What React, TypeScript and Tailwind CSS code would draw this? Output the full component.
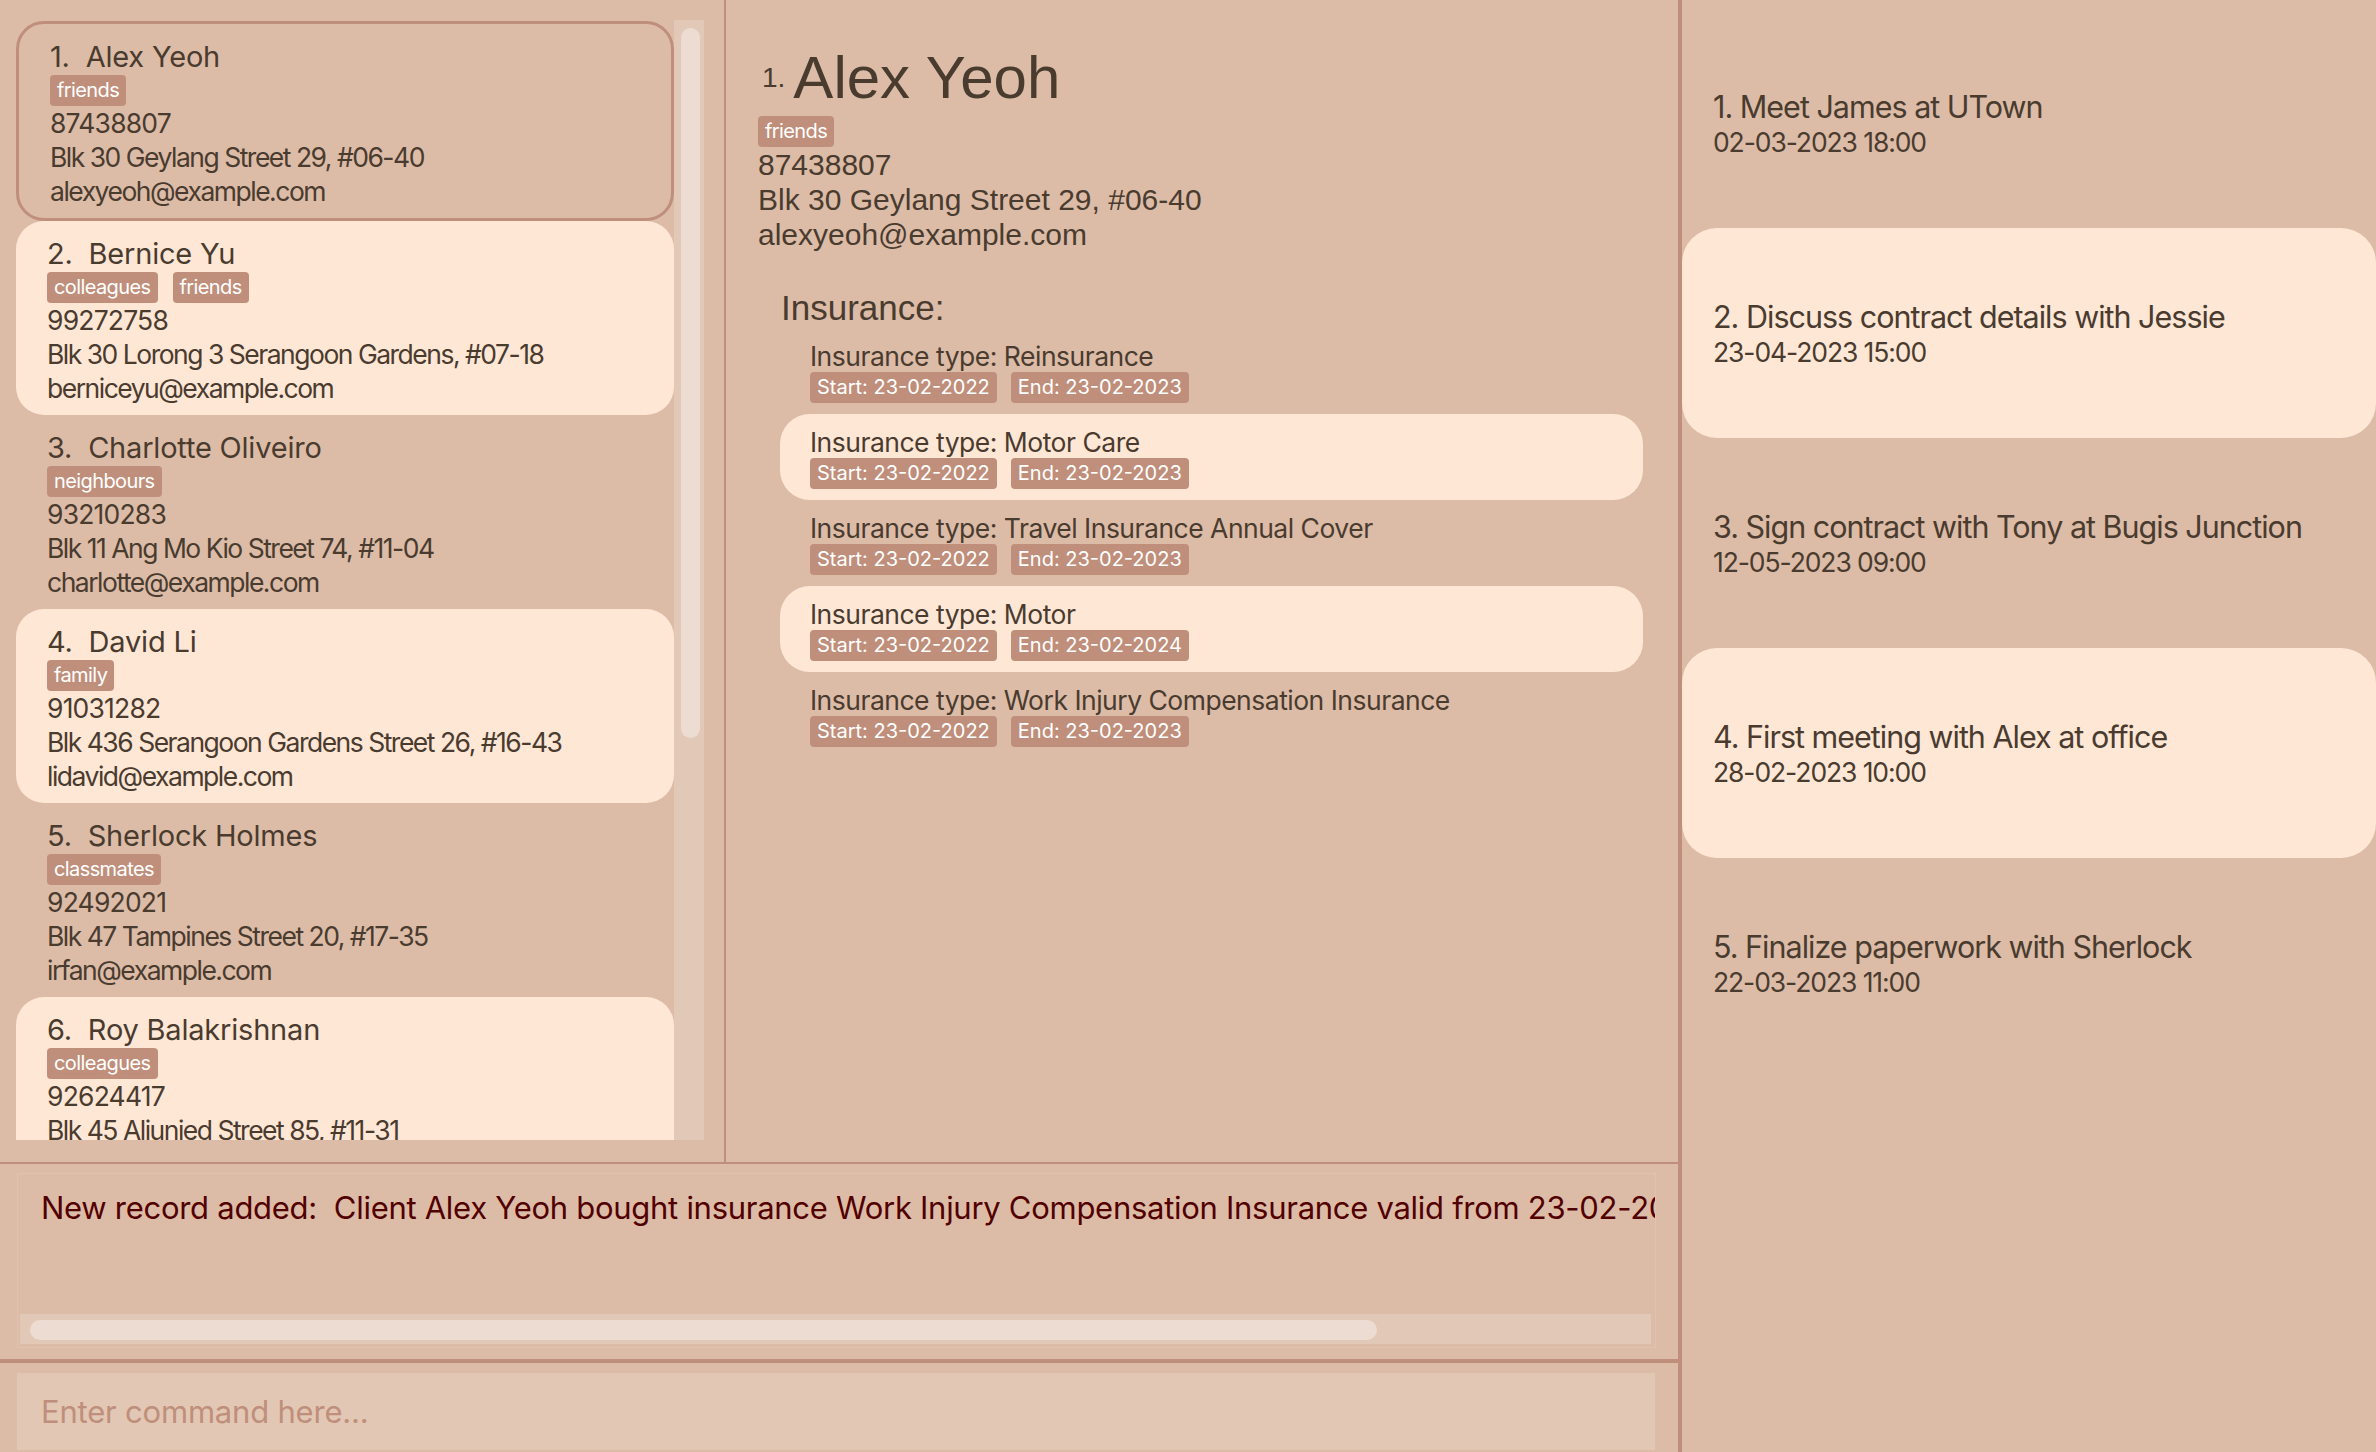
import React from 'react';

interface Person {
  name: string;
  tags: string[];
  phone: string;
  address: string;
  email: string;
}

const persons: Person[] = [
  { name: 'Alex Yeoh', tags: ['friends'], phone: '87438807', address: 'Blk 30 Geylang Street 29, #06-40', email: 'alexyeoh@example.com' },
  { name: 'Bernice Yu', tags: ['colleagues', 'friends'], phone: '99272758', address: 'Blk 30 Lorong 3 Serangoon Gardens, #07-18', email: 'berniceyu@example.com' },
  { name: 'Charlotte Oliveiro', tags: ['neighbours'], phone: '93210283', address: 'Blk 11 Ang Mo Kio Street 74, #11-04', email: 'charlotte@example.com' },
  { name: 'David Li', tags: ['family'], phone: '91031282', address: 'Blk 436 Serangoon Gardens Street 26, #16-43', email: 'lidavid@example.com' },
  { name: 'Sherlock Holmes', tags: ['classmates'], phone: '92492021', address: 'Blk 47 Tampines Street 20, #17-35', email: 'irfan@example.com' },
  { name: 'Roy Balakrishnan', tags: ['colleagues'], phone: '92624417', address: 'Blk 45 Aljunied Street 85, #11-31', email: 'royb@example.com' },
];

const insurances = [
  { type: 'Reinsurance', start: '23-02-2022', end: '23-02-2023' },
  { type: 'Motor Care', start: '23-02-2022', end: '23-02-2023' },
  { type: 'Travel Insurance Annual Cover', start: '23-02-2022', end: '23-02-2023' },
  { type: 'Motor', start: '23-02-2022', end: '23-02-2024' },
  { type: 'Work Injury Compensation Insurance', start: '23-02-2022', end: '23-02-2023' },
];

const events = [
  { title: 'Meet James at UTown', when: '02-03-2023 18:00' },
  { title: 'Discuss contract details with Jessie', when: '23-04-2023 15:00' },
  { title: 'Sign contract with Tony at Bugis Junction', when: '12-05-2023 09:00' },
  { title: 'First meeting with Alex at office', when: '28-02-2023 10:00' },
  { title: 'Finalize paperwork with Sherlock', when: '22-03-2023 11:00' },
];

const Tag: React.FC<{ children: React.ReactNode; tight?: boolean }> = ({ children, tight }) => (
  <span
    className={
      'h-[31px] rounded-[4px] bg-[#bf8f7b] px-[7px] text-[20px] leading-[31px] text-white whitespace-nowrap ' +
      (tight ? 'tracking-[-0.6px]' : 'tracking-[0px]')
    }
  >
    {children}
  </span>
);

const PersonCard: React.FC<{ p: Person; i: number }> = ({ p, i }) => {
  const selected = i === 0;
  const shaded = i % 2 === 1;
  return (
    <div
      className={
        'shrink-0 rounded-[28px] pl-[31px] pt-[15px] pb-[10px] ' +
        (shaded ? 'bg-[#ffe7d6] ' : '') +
        (selected ? 'border-[3px] border-[#bf8f7b]' : '')
      }
    >
      <div className="whitespace-pre text-[29px] leading-[36px] tracking-[-0.2px]">{`${i + 1}.  ${p.name}`}</div>
      <div className="flex gap-[15px]">
        {p.tags.map((t) => (
          <Tag key={t} tight>
            {t}
          </Tag>
        ))}
      </div>
      <div className="text-[26.5px] leading-[34px] tracking-[-0.8px]">{p.phone}</div>
      <div className="whitespace-nowrap text-[26.5px] leading-[34px] tracking-[-1.5px]">{p.address}</div>
      <div className="text-[26.5px] leading-[34px] tracking-[-1.5px]">{p.email}</div>
    </div>
  );
};

const PersonList = () => (
  <div className="flex w-[726px] shrink-0 border-r-2 border-[#bf8f7b] pl-[16px] pt-[20px]">
    <div className="flex h-[1120px] w-[658px] flex-col overflow-hidden pt-[1px]">
      {persons.map((p, i) => (
        <PersonCard key={p.name} p={p} i={i} />
      ))}
    </div>
    <div className="h-[1120px] w-[30px] bg-[#e2c8b7] pl-[7px] pt-[8px]">
      <div className="h-[710px] w-[19px] rounded-full bg-[#eddcd2]" />
    </div>
  </div>
);

const Detail = () => (
  <div className="flex-1 pl-[32px] pt-[44px] font-['Liberation_Sans',sans-serif]">
    <div className="flex items-center gap-[8px] pl-[4px]">
      <span className="text-[28px] leading-[34px]">1.</span>
      <span className="text-[60px] leading-[68px]">Alex Yeoh</span>
    </div>
    <div className="mt-[4px] flex font-['Inter',sans-serif]">
      <Tag tight>friends</Tag>
    </div>
    <div className="text-[30px] leading-[35px]">87438807</div>
    <div className="text-[30px] leading-[35px]">Blk 30 Geylang Street 29, #06-40</div>
    <div className="text-[30px] leading-[35px]">alexyeoh@example.com</div>
    <div className="ml-[23px] mt-[37px] text-[35px] leading-[38px]">Insurance:</div>
    <div className="ml-[22px] mt-[1px] flex w-[863px] flex-col font-['Inter',sans-serif]">
      {insurances.map((ins, i) => (
        <div key={ins.type} className={'rounded-[30px] pl-[30px] pt-[12px] pb-[11px] ' + (i % 2 === 1 ? 'bg-[#ffe7d6]' : '')}>
          <div className="text-[26.5px] leading-[32px] tracking-[-0.5px]">Insurance type: {ins.type}</div>
          <div className="flex gap-[14px]">
            <Tag>Start: {ins.start}</Tag>
            <Tag>End: {ins.end}</Tag>
          </div>
        </div>
      ))}
    </div>
  </div>
);

const ResultDisplay = () => (
  <div className="h-[195px] shrink-0 pl-[17px] pr-[22px] pt-[9px]">
    <div className="flex h-[175px] flex-col justify-between overflow-hidden border border-[#dfc3b0]">
      <div className="whitespace-nowrap pl-[23px] pt-[15px] text-[31px] leading-[38px] tracking-[-0.28px] text-[#520000]">
        New record added:&nbsp; Client Alex Yeoh bought insurance Work Injury Compensation Insurance valid from 23-02-2022 to 23-02-2023
      </div>
      <div className="mb-[3px] ml-[2px] mr-[4px] h-[30px] bg-[#e2c8b7] pl-[10px] pt-[6px]">
        <div className="h-[20px] w-[1347px] rounded-full bg-[#eddcd2]" />
      </div>
    </div>
  </div>
);

const CommandBox = () => (
  <div className="h-[89px] shrink-0 pl-[17px] pr-[23px] pt-[10px]">
    <input
      placeholder="Enter command here..."
      className="h-[77px] w-full bg-[#e2c7b5] pl-[24px] text-[31px] tracking-[-0.2px] text-[#4a3b2f] outline-none placeholder:text-[#bf8f7b]"
    />
  </div>
);

const EventList = () => (
  <div className="flex flex-1 flex-col pt-[18px]">
    {events.map((e, i) => (
      <div
        key={e.title}
        className={'flex h-[210px] shrink-0 flex-col justify-center rounded-[35px] pl-[31px] ' + (i % 2 === 1 ? 'bg-[#ffe7d6]' : '')}
      >
        <div className="whitespace-nowrap text-[30.5px] leading-[38px] tracking-[-1px]">
          {i + 1}. {e.title}
        </div>
        <div className="text-[26.5px] leading-[32px] tracking-[-1.1px]">{e.when}</div>
      </div>
    ))}
  </div>
);

export default function App() {
  return (
    <div className="relative flex h-[1452px] w-[2376px] overflow-hidden bg-[#dcbca7] font-['Inter',sans-serif] text-[#4a3b2f]">
      <div className="flex w-[1678px] shrink-0 flex-col">
        <div className="flex h-[1162px] shrink-0">
          <PersonList />
          <Detail />
        </div>
        <div className="h-[2px] shrink-0 bg-[#bf8f7b]" />
        <ResultDisplay />
        <div className="h-[4px] shrink-0 bg-[#bf8f7b]" />
        <CommandBox />
      </div>
      <div className="w-[4px] shrink-0 bg-[#bf8f7b]" />
      <EventList />
    </div>
  );
}
